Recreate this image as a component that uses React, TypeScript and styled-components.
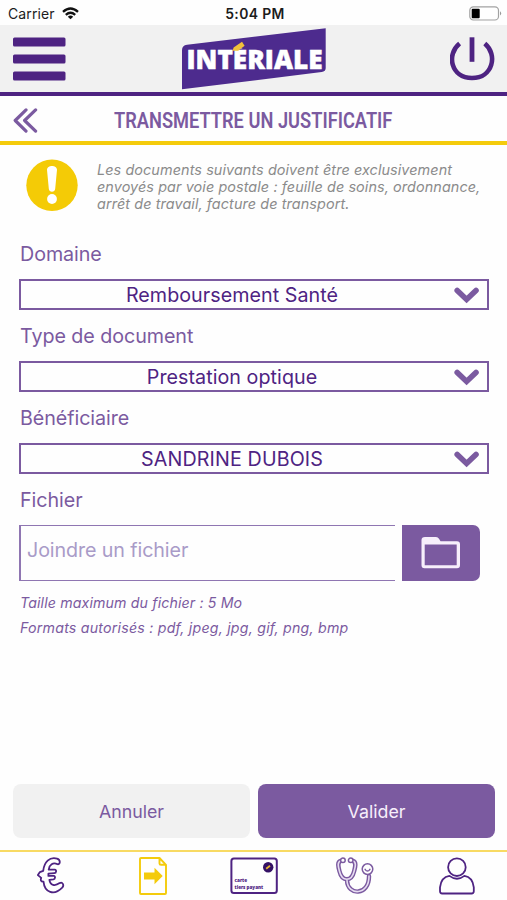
import React from "react";
import styled, { createGlobalStyle } from "styled-components";

const deep = "#4e2382";
const mid = "#7b5aa0";
const yellow = "#f4cb0c";

const GlobalStyle = createGlobalStyle`
  * { box-sizing: border-box; }
  body { margin: 0; background: #fefefe; font-family: Inter, "Liberation Sans", sans-serif; }
  button { font-family: inherit; cursor: pointer; }
`;

const Screen = styled.div`
  width: 507px;
  height: 900px;
  display: flex;
  flex-direction: column;
  overflow: hidden;
  background: #fefefe;
`;

const StatusBar = styled.div`
  height: 25px;
  display: grid;
  grid-template-columns: 1fr auto 1fr;
  align-items: center;
  padding: 2px 5px 0 8px;
  color: #1c1c1c;
  font-size: 14px;
`;
const Carrier = styled.span`
  display: flex;
  align-items: center;
  gap: 7px;
  letter-spacing: 0.1px;
`;
const Clock = styled.span`
  font-weight: 600;
  font-size: 13.9px;
  letter-spacing: 0.4px;
`;
const BatterySlot = styled.span`
  display: flex;
  justify-content: flex-end;
`;

const Header = styled.header`
  height: 71px;
  background: #f1f1f1;
  border-bottom: 4px solid ${deep};
  display: grid;
  grid-template-columns: 1fr auto 1fr;
  padding: 0 12px 0 13px;
`;
const IconButton = styled.button<{ $end?: boolean }>`
  border: 0;
  padding: 0;
  background: none;
  display: flex;
  align-items: flex-start;
  justify-content: ${(p) => (p.$end ? "flex-end" : "flex-start")};
`;

const TitleBar = styled.div`
  height: 49px;
  border-bottom: 4px solid ${yellow};
  display: grid;
  grid-template-columns: 25px 1fr 26px;
  align-items: center;
  padding: 3px 13px 0;
`;
const Title = styled.h1`
  margin: 0;
  justify-self: center;
  white-space: nowrap;
  font: 600 21.4px Roboto, sans-serif;
  color: ${mid};
  transform: scaleX(0.853);
`;

const Content = styled.main`
  flex: 1;
  display: flex;
  flex-direction: column;
  padding: 14px 19px 0;
`;
const Notice = styled.div`
  display: flex;
  height: 66.6px;
  padding-left: 7px;
  gap: 19px;
`;
const NoticeText = styled.p`
  margin: 1.5px 0 0;
  font-size: 14.4px;
  line-height: 17.3px;
  font-style: italic;
  letter-spacing: 0.09px;
  white-space: nowrap;
  color: #8b8b8b;
`;

const Field = styled.section`
  height: 82.1px;
`;
const Label = styled.label`
  display: block;
  height: 53px;
  padding: 16px 0 0 1px;
  line-height: 24px;
  font-size: 19.7px;
  letter-spacing: -0.06px;
  color: ${mid};
`;
const Select = styled.button`
  width: 470px;
  height: 31px;
  padding: 1px 7px 0 0;
  background: #fefefe;
  border: 2px solid ${mid};
  display: flex;
  align-items: center;
`;
const SelectValue = styled.span<{ $tracking?: number }>`
  flex: 1;
  padding-right: 11px;
  text-align: center;
  font-size: 19.7px;
  line-height: 24px;
  white-space: nowrap;
  letter-spacing: ${(p) => p.$tracking ?? 0}px;
  color: ${deep};
`;

const FileRow = styled.div`
  display: flex;
  gap: 7px;
  height: 56px;
`;
const FileInput = styled.div`
  width: 376px;
  border: 1px solid #8f76b2;
  border-left-width: 2px;
  border-right: 0;
  padding: 11px 0 0 6px;
  font-size: 19.7px;
  line-height: 26px;
  letter-spacing: -0.1px;
  color: #a99bc8;
`;
const FolderButton = styled.button`
  width: 78px;
  border: 0;
  padding: 0;
  background: ${mid};
  border-radius: 0 7px 7px 0;
  display: flex;
  align-items: center;
  justify-content: center;
`;
const Hints = styled.div`
  padding: 9px 0 0 1px;
`;
const Hint = styled.p<{ $tracking: number }>`
  margin: 0;
  font-size: 14.2px;
  line-height: 25px;
  font-style: italic;
  letter-spacing: ${(p) => p.$tracking}px;
  color: ${mid};
`;

const Actions = styled.div`
  display: flex;
  gap: 8px;
  padding: 0 12px 12px 13px;
`;
const Action = styled.button<{ $primary?: boolean }>`
  flex: 1;
  height: 54px;
  border: 0;
  border-radius: 8px;
  font-size: 17.8px;
  padding-bottom: 1px;
  background: ${(p) => (p.$primary ? mid : "#f1f1f1")};
  color: ${(p) => (p.$primary ? "#f7effb" : mid)};
`;

const TabBar = styled.nav`
  height: 50px;
  border-top: 2px solid #f8da63;
  display: grid;
  grid-template-columns: repeat(5, 1fr);
`;
const Tab = styled.button`
  border: 0;
  padding: 5px 0 0 1px;
  background: none;
  display: flex;
  align-items: flex-start;
  justify-content: center;
`;

const Wifi = () => (
  <svg width="17" height="13" viewBox="0 0 17 13" fill="none" stroke="#111" strokeWidth="2.3">
    <path d="M1 4.9Q8.5-1.9 16 4.9M3.8 7.8Q8.5 3.6 13.2 7.8" />
    <path d="M8.5 12.3 5.8 9.7Q8.5 7.5 11.2 9.7Z" fill="#111" stroke="none" />
  </svg>
);
const Battery = () => (
  <svg width="33" height="15" viewBox="0 0 33 15">
    <rect x=".8" y=".8" width="28.7" height="13.2" rx="3.6" fill="#fff" stroke="#a2a2a2" strokeWidth="1.2" />
    <rect x="2.7" y="2.7" width="8" height="9.5" rx="1" fill="#000" />
    <path d="M31 5.3q2.4 2.1 0 4.2z" fill="#999" />
  </svg>
);
const Menu = () => (
  <svg width="53" height="67" viewBox="0 0 53 67" fill={deep}>
    <rect y="12.5" width="52.5" height="9" rx="1.5" />
    <rect y="29.5" width="52.5" height="9" rx="1.5" />
    <rect y="46.5" width="52.5" height="9" rx="1.5" />
  </svg>
);
const Logo = () => (
  <svg width="146" height="67" viewBox="181 25 146 67">
    <clipPath id="letters">
      <rect x="181" y="48.6" width="146" height="30" />
    </clipPath>
    <path d="M182 89.3V50q0-4.5 5-5.2L325.7 28.3V68q0 3.5-4 4.1Z" fill="#4d2b8e" />
    <g clipPath="url(#letters)">
      <text x="186.5" y="69.3" textLength="136" lengthAdjust="spacingAndGlyphs" fontFamily="Open Sans, sans-serif" fontWeight="800" fontSize="27" fill="#fff" stroke="#fff" strokeWidth=".5">
        INTÉRIALE
      </text>
    </g>
    <path d="m233.6 47.6 8.4-5.8 2.6 4-6.5 4.9h-5.5z" fill="#f0c13a" />
  </svg>
);
const Power = () => (
  <svg width="45" height="67" viewBox="450 25 45 67" fill="none" stroke={deep}>
    <path d="M459.6 43.5C446 54.5 451 78 472 78S498 54.5 484.8 43.5" strokeWidth="4.6" />
    <path d="M472 37.3v24.5" strokeWidth="4.8" />
  </svg>
);
const Back = () => (
  <svg width="25" height="26" viewBox="0 0 25 26" fill="none" stroke={mid} strokeWidth="3.2" strokeLinecap="round" strokeLinejoin="round">
    <path d="M13 2.9 2.2 13.5 13 24.1M22.6 2.9l-11 10.6 11 10.6" />
  </svg>
);
const Warning = () => (
  <svg width="52" height="52" viewBox="0 0 52 52">
    <circle cx="26" cy="26.3" r="25.7" fill="#f4cb06" />
    <path d="M21 10.8c0-5.2 10-5.2 10 0l-1.8 18.9c-.2 4-6.2 4-6.4 0z" fill="#fff" />
    <circle cx="26" cy="40" r="4.9" fill="#fff" />
  </svg>
);
const Chevron = () => (
  <svg width="26" height="18" viewBox="0 0 26 18" fill="none" stroke={mid} strokeWidth="5.6" strokeLinecap="round">
    <path d="M3.2 4.4 12.6 13.4l9.4-9" />
  </svg>
);
const Folder = () => (
  <svg width="40" height="34" viewBox="0 0 40 34">
    <path
      fillRule="evenodd"
      fill="#f7effb"
      d="M4 1h11q2 0 3 1.8l1.5 2.4H36q3 0 3 3v21q0 3-3 3H3.5q-3 0-3-3V4q0-3 3.5-3zM3.7 8.6v20.6h32V8.6z"
    />
  </svg>
);

const Euro = () => (
  <svg width="32" height="38" viewBox="0 0 32 38" strokeLinejoin="round" strokeWidth="1.8" fill="#fefefe" stroke={deep}>
    <path d="M22.5 7.2C18 5 14.3 7.6 13.7 12.6h6.1c2 0 1.6 3.4-.4 3.6l-6 .5v2.2h5.4c1.8.1 1.5 3.2-.4 3.5l-4 .5c.8 5.6 5.4 6.6 10.3 3.2 2.8-1.5 4.8 2.1 2.5 4.6C19 39 9.6 35.6 8.5 24.6 5.7 24.8 5.4 23 6.2 20.9L2.9 18.1l2-3 3.3-1.3C9.2 5 14.5-.4 22 1.6c3.8 1 3.5 6 .5 5.6z" />
  </svg>
);
const Transfer = () => (
  <svg width="28" height="38" viewBox="0 0 28 38" fill="none" stroke={yellow} strokeWidth="1.9" strokeLinejoin="round">
    <path d="M2 1h18.5l6.5 6.8V36a1 1 0 0 1-1 1H2a1 1 0 0 1-1-1V2a1 1 0 0 1 1-1zM20.5 1v5.5q0 1.3 1.5 1.3h5" />
    <path d="M5 15.5h10.5V10.7L23.7 19l-8.2 8.3v-4.8H5z" fill={yellow} stroke="none" />
  </svg>
);
const Card = () => (
  <svg width="48" height="38" viewBox="0 0 48 38">
    <rect x="1.4" y="1.5" width="45.4" height="34.5" rx="2.5" fill="none" stroke={deep} strokeWidth="2" />
    <circle cx="38.2" cy="10.3" r="5.2" fill="#341165" />
    <path d="m36.2 11.8 3.8-3" stroke="#e8b632" strokeWidth="1.8" />
    <g fill={deep} fontFamily="Open Sans, sans-serif" fontWeight="800" fontSize="4.8">
      <text x="4.6" y="25.4" textLength="12.5" lengthAdjust="spacingAndGlyphs">carte</text>
      <text x="4.6" y="32.2" textLength="28.5" lengthAdjust="spacingAndGlyphs">tiers payant</text>
    </g>
  </svg>
);
const Stethoscope = () => (
  <svg width="38" height="39" viewBox="0 0 38 39" fill="none">
    <g strokeLinecap="round">
      <path d="M4.8 3.8C1 5 2.2 9.5 3.4 14c1.2 5 3.6 8.3 7.4 8.3s6.2-3.3 7.4-8.3c1.2-4.5 2.4-9-1.4-10.2M11 23.5c.6 15.5 22.3 15.5 22-4.5" stroke={mid} strokeWidth="4.4" />
      <path d="M4.8 3.8C1 5 2.2 9.5 3.4 14c1.2 5 3.6 8.3 7.4 8.3s6.2-3.3 7.4-8.3c1.2-4.5 2.4-9-1.4-10.2M11 23.5c.6 15.5 22.3 15.5 22-4.5" stroke="#e6dcf0" strokeWidth="1.6" />
    </g>
    <g fill="#fefefe" stroke={mid} strokeWidth="1.5">
      <circle cx="6.9" cy="3.3" r="2.3" />
      <circle cx="14.7" cy="3.3" r="2.3" />
      <circle cx="31.5" cy="12.1" r="5.3" />
      <path d="M29.2 11.8v.8q2.3 3 4.6 0v-.8" fill="none" />
    </g>
  </svg>
);
const Person = () => (
  <svg width="36" height="38" viewBox="0 0 36 38" fill="none" stroke={deep} strokeWidth="1.8" strokeLinejoin="round">
    <circle cx="17.9" cy="10.2" r="8.8" />
    <path d="M10.4 18.9Q2.2 20.1 1 30.3v4q0 2.2 2.2 2.2h29.4q2.2 0 2.2-2.2v-4Q33.6 20.1 25.4 18.9 18 24.6 10.4 18.9z" />
  </svg>
);

const fields = [
  { label: "Domaine", value: "Remboursement Santé", tracking: 0.05 },
  { label: "Type de document", value: "Prestation optique", tracking: 0.05 },
  { label: "Bénéficiaire", value: "SANDRINE DUBOIS", tracking: 0.13 },
];
const tabs = [
  { name: "Remboursements", Icon: Euro },
  { name: "Transmettre", Icon: Transfer },
  { name: "Carte", Icon: Card },
  { name: "Soins", Icon: Stethoscope },
  { name: "Profil", Icon: Person },
];

export default function App() {
  return (
    <Screen>
      <GlobalStyle />
      <StatusBar>
        <Carrier>Carrier <Wifi /></Carrier>
        <Clock>5:04 PM</Clock>
        <BatterySlot><Battery /></BatterySlot>
      </StatusBar>
      <Header>
        <IconButton aria-label="Menu"><Menu /></IconButton>
        <Logo />
        <IconButton $end aria-label="Déconnexion"><Power /></IconButton>
      </Header>
      <TitleBar>
        <IconButton aria-label="Retour"><Back /></IconButton>
        <Title>TRANSMETTRE UN JUSTIFICATIF</Title>
      </TitleBar>
      <Content>
        <Notice>
          <Warning />
          <NoticeText>
            Les documents suivants doivent être exclusivement<br />
            envoyés par voie postale : feuille de soins, ordonnance,<br />
            arrêt de travail, facture de transport.
          </NoticeText>
        </Notice>
        {fields.map((f) => (
          <Field key={f.label}>
            <Label>{f.label}</Label>
            <Select>
              <SelectValue $tracking={f.tracking}>{f.value}</SelectValue>
              <Chevron />
            </Select>
          </Field>
        ))}
        <Label>Fichier</Label>
        <FileRow>
          <FileInput>Joindre un fichier</FileInput>
          <FolderButton aria-label="Parcourir"><Folder /></FolderButton>
        </FileRow>
        <Hints>
          <Hint $tracking={0.13}>Taille maximum du fichier : 5 Mo</Hint>
          <Hint $tracking={0.22}>Formats autorisés : pdf, jpeg, jpg, gif, png, bmp</Hint>
        </Hints>
      </Content>
      <Actions>
        <Action>Annuler</Action>
        <Action $primary>Valider</Action>
      </Actions>
      <TabBar>
        {tabs.map(({ name, Icon }) => (
          <Tab key={name} aria-label={name}><Icon /></Tab>
        ))}
      </TabBar>
    </Screen>
  );
}
